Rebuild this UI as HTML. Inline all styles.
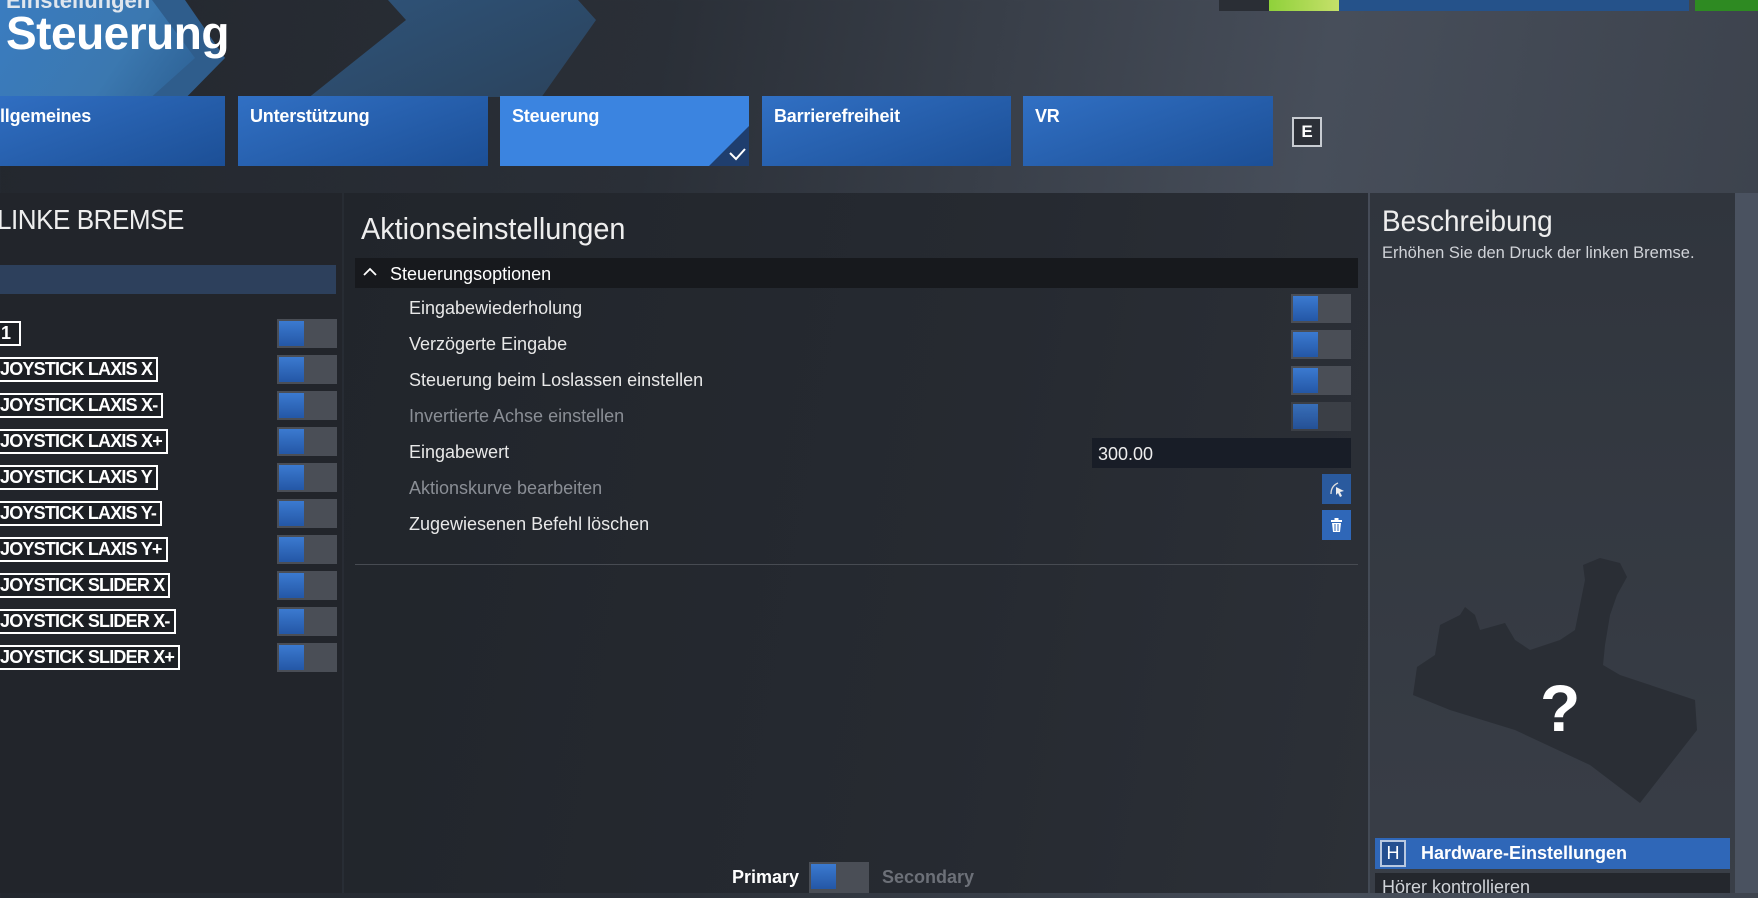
<!DOCTYPE html>
<html><head><meta charset="utf-8"><style>
*{margin:0;padding:0;box-sizing:border-box}
body{width:1758px;height:893px;overflow:hidden;position:relative;font-family:"Liberation Sans",sans-serif;color:#fff;
background:linear-gradient(100deg,#23272e 0%,#2a2f37 35%,#474e5a 70%,#3a404a 100%)}
.abs{position:absolute}
.tab{position:absolute;top:96px;height:70px;background:linear-gradient(160deg,#3170c4,#1c4f96);font-weight:bold;font-size:18px;padding:10px 12px;letter-spacing:-0.2px}
.tog{position:absolute;width:60px;height:29px;background:#4a4e56}
.tog::before{content:"";position:absolute;left:2px;top:2px;width:25px;height:25px;background:linear-gradient(#3b7ad0,#2457a6)}
.lab{position:absolute;left:-4px;height:25px;border:2px solid #fff;border-left:none;font-weight:bold;font-size:18px;line-height:21px;padding:0 4px;letter-spacing:-0.8px;background:#1c1f24}
.opt{position:absolute;left:409px;font-size:18px;color:#e8e8e8}
.dim{color:#8a8e95}
.thin{transform-origin:left top;transform:scaleX(0.93)}
</style></head><body>
<!-- chevrons -->
<svg class="abs" style="left:0;top:0" width="700" height="97"><defs>
<linearGradient id="g1" x1="0" y1="0" x2="1" y2="0.6"><stop offset="0" stop-color="#3a7cc0"/><stop offset="0.6" stop-color="#3b78b0"/><stop offset="1" stop-color="#2c5f92"/></linearGradient>
<linearGradient id="g2" x1="0" y1="0" x2="1" y2="1"><stop offset="0" stop-color="#2f5780"/><stop offset="1" stop-color="#2a3d52"/></linearGradient></defs>
<polygon points="0,0 185,0 225,58 115,170 0,170" fill="#2f5d8c"/>
<polygon points="0,0 152,0 195,58 70,170 0,170" fill="url(#g1)"/>
<polygon points="388,0 578,0 596,20 490,170 218,170 406,20" fill="url(#g2)"/>
</svg>
<div class="abs" style="left:6px;top:-12px;font-size:22px;font-weight:bold;color:#dfe6ee">Einstellungen</div>
<div class="abs" style="left:6px;top:6px;font-size:46px;font-weight:bold;letter-spacing:-0.5px">Steuerung</div>
<!-- top right bar -->
<div class="abs" style="left:1219px;top:0;width:50px;height:11px;background:#2a2e35"></div>
<div class="abs" style="left:1269px;top:0;width:420px;height:11px;background:#25528a"></div>
<div class="abs" style="left:1269px;top:0;width:70px;height:11px;background:linear-gradient(90deg,#8fd13a,#c6e06a)"></div>
<div class="abs" style="left:1695px;top:0;width:63px;height:11px;background:#2e8a22"></div>
<!-- tabs -->
<div class="tab" style="left:-20px;width:245px;padding-left:20px">llgemeines</div>
<div class="tab" style="left:238px;width:250px">Unterstützung</div>
<div class="tab" style="left:500px;width:249px;background:#3b84e0">Steuerung
<svg class="abs" style="right:0;bottom:0" width="60" height="40"><polygon points="60,0 60,40 20,40" fill="#1f3e6e"/><polyline points="41,27 47,33 56,23" fill="none" stroke="#fff" stroke-width="2"/></svg></div>
<div class="tab" style="left:762px;width:249px">Barrierefreiheit</div>
<div class="tab" style="left:1023px;width:250px">VR</div>
<div class="abs" style="left:1292px;top:117px;width:30px;height:30px;border:2px solid #c8ccd2;background:#2c3038;font-weight:bold;font-size:17px;text-align:center;line-height:26px">E</div>
<!-- left panel -->
<div class="abs" style="left:0;top:193px;width:342px;height:700px;background:#22252b"></div>
<div class="abs thin" style="left:-3px;top:204px;font-size:28px;color:#eee;letter-spacing:-0.5px">LINKE BREMSE</div>
<div class="abs" style="left:0;top:265px;width:336px;height:29px;background:#2d405c"></div>
<div class="lab" style="top:321px;width:25px;padding:0 5px">1</div>
<div class="tog" style="left:277px;top:319px"></div>
<div class="lab" style="top:357px">JOYSTICK LAXIS X</div><div class="tog" style="left:277px;top:355px"></div>
<div class="lab" style="top:393px">JOYSTICK LAXIS X-</div><div class="tog" style="left:277px;top:391px"></div>
<div class="lab" style="top:429px">JOYSTICK LAXIS X+</div><div class="tog" style="left:277px;top:427px"></div>
<div class="lab" style="top:465px">JOYSTICK LAXIS Y</div><div class="tog" style="left:277px;top:463px"></div>
<div class="lab" style="top:501px">JOYSTICK LAXIS Y-</div><div class="tog" style="left:277px;top:499px"></div>
<div class="lab" style="top:537px">JOYSTICK LAXIS Y+</div><div class="tog" style="left:277px;top:535px"></div>
<div class="lab" style="top:573px">JOYSTICK SLIDER X</div><div class="tog" style="left:277px;top:571px"></div>
<div class="lab" style="top:609px">JOYSTICK SLIDER X-</div><div class="tog" style="left:277px;top:607px"></div>
<div class="lab" style="top:645px">JOYSTICK SLIDER X+</div><div class="tog" style="left:277px;top:643px"></div>
<!-- middle panel -->
<div class="abs" style="left:344px;top:193px;width:1024px;height:700px;background:linear-gradient(100deg,#21252b,#262a31 60%,#2c3037)"></div>
<div class="abs thin" style="left:361px;top:211px;font-size:31px;color:#eee">Aktionseinstellungen</div>
<div class="abs" style="left:355px;top:258px;width:1003px;height:30px;background:#17191d"></div>
<svg class="abs" style="left:362px;top:265px" width="16" height="14"><polyline points="2,10 8,4 14,10" fill="none" stroke="#fff" stroke-width="1.8"/></svg>
<div class="abs" style="left:390px;top:264px;font-size:18px">Steuerungsoptionen</div>
<div class="opt" style="top:298px">Eingabewiederholung</div><div class="tog" style="left:1291px;top:294px"></div>
<div class="opt" style="top:334px">Verzögerte Eingabe</div><div class="tog" style="left:1291px;top:330px"></div>
<div class="opt" style="top:370px">Steuerung beim Loslassen einstellen</div><div class="tog" style="left:1291px;top:366px"></div>
<div class="opt dim" style="top:406px">Invertierte Achse einstellen</div><div class="tog" style="left:1291px;top:402px;background:#3e4249;opacity:.85"></div>
<div class="opt" style="top:442px">Eingabewert</div>
<div class="abs" style="left:1092px;top:438px;width:259px;height:30px;background:#181d27;font-size:18px;padding:6px 6px;color:#eee">300.00</div>
<div class="opt dim" style="top:478px">Aktionskurve bearbeiten</div>
<div class="abs" style="left:1322px;top:474px;width:29px;height:30px;background:#2a5a9e"><svg width="29" height="30"><path d="M9 20 Q9 12 16 9" fill="none" stroke="#ddd" stroke-width="1.3"/><polygon points="14,13 22,17 18,18 20,22 18,23 16,19 14,21" fill="#eee"/></svg></div>
<div class="opt" style="top:514px">Zugewiesenen Befehl löschen</div>
<div class="abs" style="left:1322px;top:510px;width:29px;height:30px;background:#2f67b8"><svg width="29" height="30"><rect x="9" y="10" width="11" height="2" fill="#fff"/><rect x="12.5" y="8" width="4" height="2" fill="#fff"/><path d="M10 13 h9 l-1 9 h-7 z" fill="#fff"/><path d="M13 14v7M16 14v7" stroke="#2f67b8" stroke-width="1"/></svg></div>
<div class="abs" style="left:355px;top:564px;width:1003px;height:1px;background:#474b52"></div>
<div class="abs" style="left:732px;top:867px;font-size:18px;font-weight:bold">Primary</div>
<div class="tog" style="left:809px;top:862px;height:31px"></div>
<div class="abs" style="left:882px;top:867px;font-size:18px;font-weight:bold;color:#6c7078">Secondary</div>
<!-- right panel -->
<div class="abs" style="left:1370px;top:193px;width:365px;height:700px;background:linear-gradient(180deg,#30353d,#393e47)"></div>
<div class="abs" style="left:1735px;top:193px;width:23px;height:700px;background:#4a5260"></div>
<div class="abs thin" style="left:1382px;top:205px;font-size:30px;color:#eee">Beschreibung</div>
<div class="abs thin" style="left:1382px;top:243px;font-size:17px;color:#d0d3d8;transform:scaleX(0.97)">Erhöhen Sie den Druck der linken Bremse.</div>
<svg class="abs" style="left:1405px;top:555px" width="300" height="255"><path d="M8 140 L12 112 L30 100 L35 70 L55 60 L60 52 L70 60 L75 75 L100 68 L110 85 L125 95 L155 85 L170 75 L180 25 L178 10 L195 3 L215 8 L222 22 L212 40 L205 60 L200 90 L198 110 L215 120 L290 145 L292 175 L235 248 L185 210 L110 175 L45 155 Z" fill="#2a2e35"/></svg>
<div class="abs" style="left:1540px;top:670px;font-size:66px;font-weight:bold">?</div>
<div class="abs" style="left:1375px;top:838px;width:355px;height:31px;background:#2f67b8"></div>
<div class="abs" style="left:1380px;top:840px;width:26px;height:27px;border:2px solid #b8c8e0;background:#244f90;font-size:18px;text-align:center;line-height:23px">H</div>
<div class="abs" style="left:1421px;top:843px;font-size:18px;font-weight:bold">Hardware-Einstellungen</div>
<div class="abs" style="left:1375px;top:873px;width:355px;height:20px;background:#24272d"></div>
<div class="abs" style="left:1382px;top:877px;font-size:18px;color:#d0d3d8">Hörer kontrollieren</div>
</body></html>
